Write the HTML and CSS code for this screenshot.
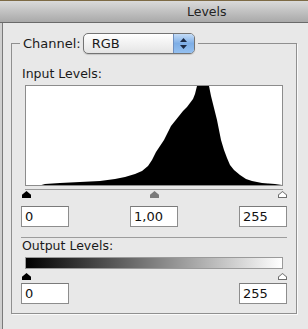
FILE: index.html
```html
<!DOCTYPE html>
<html lang="en">

<head>
    <meta charset="UTF-8">
    <meta name="viewport" content="width=device-width, initial-scale=1.0">
    <title>Levels</title>
    <link rel="stylesheet" href="styles.css">
</head>

<body>
    <div class="window">
        <div class="titlebar">Levels</div>

        <div class="panel">
            <fieldset class="group">
                <legend class="channel">
                    <label for="channelSelect">Channel:</label>
                    <div class="popup" id="channelSelect">
                        <span class="popup-text">RGB</span>
                        <span class="stepper">
                            <svg width="7" height="11" viewBox="0 0 7 11">
                                <path d="M3.5 0 L7 4 H0 Z" fill="#1c2a44" />
                                <path d="M0 7 H7 L3.5 11 Z" fill="#1c2a44" />
                            </svg>
                        </span>
                    </div>
                </legend>

                <div class="section-label section-label-first">Input Levels:</div>
                <div class="histogram">
                    <svg width="256" height="99" viewBox="26 86 256 99" preserveAspectRatio="none">
                        <polygon fill="#000" points="38,186 45,184 60,183 80,182 100,181 115,179 125,177 135,174 142,171 148,166 152,160 156,152 160,146 164,140 168,132 171,126 175,121 179,116 183,111 187,107 190,103 193,99 195,94 197,86 209,86 211,96 213,104 215,112 217,120 219,130 221,140 224,150 227,158 230,165 234,170 240,175 246,179 252,181 262,183 275,184 282,185 282,186" />
                    </svg>
                </div>
                <div class="slider slider-track">
                    <span class="thumb thumb-black" style="left: 1px"></span>
                    <span class="thumb thumb-gray" style="left: 129px"></span>
                    <span class="thumb thumb-white" style="left: 257px"></span>
                </div>
                <div class="fields">
                    <input type="text" class="field" value="0">
                    <input type="text" class="field" value="1,00">
                    <input type="text" class="field" value="255">
                </div>

                <hr class="sep">

                <div class="section-label">Output Levels:</div>
                <div class="ramp"></div>
                <div class="slider slider-plain">
                    <span class="thumb thumb-black" style="left: 1px"></span>
                    <span class="thumb thumb-white" style="left: 257px"></span>
                </div>
                <div class="fields fields-output">
                    <input type="text" class="field" value="0">
                    <input type="text" class="field" value="255">
                </div>
            </fieldset>
        </div>
    </div>
</body>

</html>
```

FILE: styles.css
```css
body {
    margin: 0;
    font-family: "DejaVu Sans", Arial, sans-serif;
    font-size: 12.5px;
    color: #1a1a1a;
    background-color: #cfcfcf;
}

.window {
    width: 308px;
    height: 329px;
    overflow: hidden;
    background-color: #cfcfcf;
}

.titlebar {
    height: 21px;
    line-height: 21px;
    padding-left: 187px;
    border-top: 1px solid #7d6a45;
    border-bottom: 1px solid #6a6a6a;
    background: linear-gradient(#dadada, #a9a9a9);
    color: #222;
}

.panel {
    margin-left: 2px;
    border-left: 1px solid #7a7a7a;
    padding: 10px 11px 0 8px;
    height: 306px;
    background-color: #e8e8e8;
}

.group {
    margin: 0;
    padding: 0 9px 9px 9px;
    border: 1px solid #8f8f8f;
    box-shadow: 1px 1px 0 #fafafa;
}

.channel {
    display: flex;
    align-items: center;
    margin-left: -1px;
    padding: 0 3px;
    height: 21px;
}

.channel label {
    margin-right: 2px;
    font-size: 13px;
}

.popup {
    display: flex;
    width: 112px;
    height: 21px;
    box-sizing: border-box;
    border: 1px solid #737373;
    border-radius: 5px;
    overflow: hidden;
    background: linear-gradient(#ffffff, #e4e4e4);
    box-shadow: 0 1px 1px rgba(0, 0, 0, 0.15);
}

.popup-text {
    flex: 1;
    padding-left: 8px;
    line-height: 19px;
    font-size: 13px;
}

.stepper {
    width: 20px;
    display: flex;
    align-items: center;
    justify-content: center;
    border-left: 1px solid #6f8fbf;
    background: linear-gradient(#c4dcf7, #7eaee6 50%, #94c0f0);
}

.section-label {
    margin-left: 1px;
    line-height: 15px;
}

.section-label-first {
    margin-top: 12px;
}

.histogram {
    margin: 4px 0 0 4px;
    width: 258px;
    height: 101px;
    box-sizing: border-box;
    border: 1px solid #8c8c8c;
    background-color: #fff;
}

.histogram svg {
    display: block;
}

.slider {
    position: relative;
    margin-left: 4px;
    width: 258px;
}

.slider-track {
    margin-top: 3px;
    height: 9px;
    border-top: 1px solid #9a9a9a;
}

.slider-plain {
    margin-top: 3px;
    height: 7px;
}

.thumb {
    position: absolute;
    top: 1px;
    width: 9px;
    height: 7px;
    margin-left: -4px;
    clip-path: polygon(50% 0, 100% 55%, 100% 100%, 0 100%, 0 55%);
}

.thumb-black {
    background-color: #000;
}

.thumb-gray {
    background-color: #7a7a7a;
}

.thumb-white {
    background-color: #6e6e6e;
}

.thumb-white::after {
    content: "";
    position: absolute;
    left: 1px;
    top: 1px;
    width: 7px;
    height: 5px;
    background-color: #fff;
    clip-path: polygon(50% 0, 100% 60%, 100% 100%, 0 100%, 0 60%);
}

.fields {
    display: flex;
    justify-content: space-between;
    margin-top: 7px;
}

.fields-output {
    margin-top: 4px;
}

.field {
    width: 48px;
    height: 21px;
    box-sizing: border-box;
    margin: 0;
    padding: 0 3px;
    border: 1px solid #8d8d8d;
    border-top-color: #7a7a7a;
    background-color: #fff;
    font-family: "DejaVu Sans", Arial, sans-serif;
    font-size: 13px;
    color: #111;
    outline: none;
}

.sep {
    margin: 10px 0 0 0;
    height: 0;
    border: 0;
    border-top: 1px solid #9c9c9c;
}

.ramp {
    margin: 4px 0 0 4px;
    width: 258px;
    height: 12px;
    box-sizing: border-box;
    border: 1px solid #9a9a9a;
    background: linear-gradient(to right, #000, #fff);
}
```
